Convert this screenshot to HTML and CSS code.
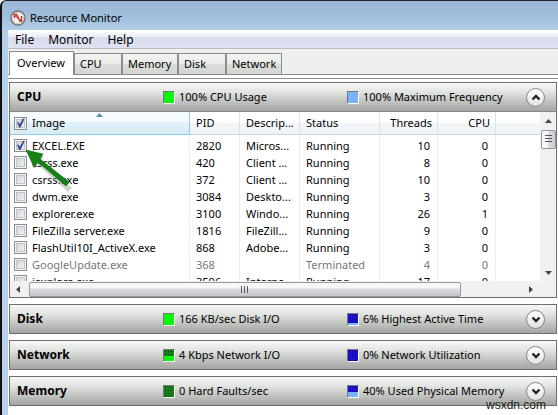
FILE: index.html
```html
<!DOCTYPE html>
<html lang="en">
<head>
<meta charset="utf-8">
<title>Resource Monitor</title>
<link rel="stylesheet" href="styles.css">
</head>
<body>
<div class="window">
  <header class="titlebar">
    <svg class="app-icon" width="16" height="16" viewBox="0 0 16 16" aria-hidden="true">
      <circle cx="8" cy="8" r="7" fill="#f4f1ef" stroke="#77736f" stroke-width="1.4"/>
      <circle cx="8" cy="8" r="5.6" fill="none" stroke="#c9c4c0" stroke-width="0.8"/>
      <path d="M4.500 8V4.500H6.500L10 11H11.500V6" fill="none" stroke="#c22a22" stroke-width="1.400"/>
      <path d="M3.500 4.500L12 11.500" stroke="#c22a22" stroke-width="1"/>
    </svg>
    <h1 class="title">Resource Monitor</h1>
  </header>
  <main class="client">
    <nav class="menubar">
      <button class="menu" type="button">File</button>
      <button class="menu" type="button">Monitor</button>
      <button class="menu" type="button">Help</button>
    </nav>
    <div class="tabs" role="tablist">
      <button class="tab active" type="button" role="tab" aria-selected="true">Overview</button>
      <button class="tab narrow" type="button" role="tab">CPU</button>
      <button class="tab mid" type="button" role="tab">Memory</button>
      <button class="tab narrow" type="button" role="tab">Disk</button>
      <button class="tab mid" type="button" role="tab">Network</button>
    </div>
    <div class="page">
      <section class="panel open">
        <div class="bar">
          <h2 class="name">CPU</h2>
          <span class="stat"><i class="swatch green"></i>100% CPU Usage</span>
          <span class="stat"><i class="swatch sky"></i>100% Maximum Frequency</span>
          <button class="toggle" type="button" aria-label="Collapse CPU"><svg width="10" height="7" viewBox="0 0 10 7"><path d="M1.500 5.500L5 2L8.500 5.500" /></svg></button>
        </div>
        <div class="list">
          <div class="view">
            <table class="grid">
              <colgroup><col class="c-image"><col class="c-pid"><col class="c-desc"><col class="c-status"><col class="c-threads"><col class="c-cpu"><col></colgroup>
              <thead>
                <tr>
                  <th class="sorted"><svg class="sort" width="7" height="4" viewBox="0 0 7 4" aria-hidden="true"><path d="M0 4L3.500 0L7 4Z" fill="#5d8ba8"/></svg><label class="pick"><input type="checkbox" checked>Image</label></th>
                  <th>PID</th><th>Descrip...</th><th>Status</th><th class="num">Threads</th><th class="num">CPU</th><th></th>
                </tr>
              </thead>
              <tbody>
                <tr><td><label class="pick"><input type="checkbox" checked>EXCEL.EXE</label></td><td>2820</td><td>Micros...</td><td>Running</td><td class="num">10</td><td class="num">0</td><td></td></tr>
                <tr><td><label class="pick"><input type="checkbox">csrss.exe</label></td><td>420</td><td>Client ...</td><td>Running</td><td class="num">8</td><td class="num">0</td><td></td></tr>
                <tr><td><label class="pick"><input type="checkbox">csrss.exe</label></td><td>372</td><td>Client ...</td><td>Running</td><td class="num">10</td><td class="num">0</td><td></td></tr>
                <tr><td><label class="pick"><input type="checkbox">dwm.exe</label></td><td>3084</td><td>Deskto...</td><td>Running</td><td class="num">3</td><td class="num">0</td><td></td></tr>
                <tr><td><label class="pick"><input type="checkbox">explorer.exe</label></td><td>3100</td><td>Windo...</td><td>Running</td><td class="num">26</td><td class="num">1</td><td></td></tr>
                <tr><td><label class="pick"><input type="checkbox">FileZilla server.exe</label></td><td>1816</td><td>FileZill...</td><td>Running</td><td class="num">9</td><td class="num">0</td><td></td></tr>
                <tr><td><label class="pick"><input type="checkbox">FlashUtil10I_ActiveX.exe</label></td><td>868</td><td>Adobe...</td><td>Running</td><td class="num">3</td><td class="num">0</td><td></td></tr>
                <tr class="ended"><td><label class="pick"><input type="checkbox">GoogleUpdate.exe</label></td><td>368</td><td></td><td>Terminated</td><td class="num">4</td><td class="num">0</td><td></td></tr>
                <tr><td><label class="pick"><input type="checkbox">iexplore.exe</label></td><td>3596</td><td>Interne...</td><td>Running</td><td class="num">17</td><td class="num">0</td><td></td></tr>
              </tbody>
            </table>
          </div>
          <div class="vscroll">
            <svg class="arrow" width="7" height="4" viewBox="0 0 7 4"><path d="M0 4L3.500 0L7 4Z"/></svg>
            <div class="vthumb"></div>
            <svg class="arrow" width="7" height="4" viewBox="0 0 7 4"><path d="M0 0L3.500 4L7 0Z"/></svg>
          </div>
          <div class="hscroll">
            <svg class="arrow" width="4" height="7" viewBox="0 0 4 7"><path d="M4 0L0 3.500L4 7Z"/></svg>
            <div class="track"><div class="hthumb"><i class="grip"></i></div></div>
            <svg class="arrow" width="4" height="7" viewBox="0 0 4 7"><path d="M0 0L4 3.500L0 7Z"/></svg>
          </div>
        </div>
      </section>
      <section class="panel">
        <div class="bar">
          <h2 class="name">Disk</h2>
          <span class="stat"><i class="swatch green"></i>166 KB/sec Disk I/O</span>
          <span class="stat"><i class="swatch blue low"></i>6% Highest Active Time</span>
          <button class="toggle" type="button" aria-label="Expand Disk"><svg width="10" height="7" viewBox="0 0 10 7"><path d="M1.500 1.500L5 5L8.500 1.500" /></svg></button>
        </div>
      </section>
      <section class="panel">
        <div class="bar">
          <h2 class="name">Network</h2>
          <span class="stat"><i class="swatch forest half"></i>4 Kbps Network I/O</span>
          <span class="stat"><i class="swatch blue"></i>0% Network Utilization</span>
          <button class="toggle" type="button" aria-label="Expand Network"><svg width="10" height="7" viewBox="0 0 10 7"><path d="M1.500 1.500L5 5L8.500 1.500" /></svg></button>
        </div>
      </section>
      <section class="panel">
        <div class="bar">
          <h2 class="name">Memory</h2>
          <span class="stat"><i class="swatch forest"></i>0 Hard Faults/sec</span>
          <span class="stat"><i class="swatch blue part"></i>40% Used Physical Memory</span>
          <button class="toggle" type="button" aria-label="Expand Memory"><svg width="10" height="7" viewBox="0 0 10 7"><path d="M1.500 1.500L5 5L8.500 1.500" /></svg></button>
        </div>
      </section>
    </div>
  </main>
  <svg class="pointer" width="54" height="48" viewBox="0 0 54 48" aria-hidden="true">
    <path d="M3 4L19 8L16 12L47 39L43 43L13 16L9 20Z" fill="#777" opacity="0.35"/>
    <path d="M1 1L18 5L15 10L44 33L41 37L13 13L9 18Z" fill="#168216" stroke="#0b6b10" stroke-width="0.6"/>
  </svg>
  <span class="watermark">wsxdn.com</span>
</div>
</body>
</html>
```
FILE: styles.css
```css
* { box-sizing: border-box; }
body {
  margin: 0;
  background: #fff;
  color: #000;
  font-family: "Noto Sans", "Open Sans", sans-serif;
  font-size: 11px;
  line-height: 16px;
}
button { font: inherit; color: inherit; margin: 0; border: 0; background: none; padding: 0; }
h1, h2 { margin: 0; font-size: inherit; font-weight: normal; }

.window {
  position: relative;
  min-height: 100vh;
  border-top: 1px solid #2b2024;
  border-left: 2px solid #101014;
  border-top-left-radius: 6px;
  background: linear-gradient(#9ab7d5, #a3c0de 18px, #b1cfe6 30px, #b9d2ec 120px);
  overflow: hidden;
}
.titlebar {
  display: flex;
  align-items: center;
  gap: 4px;
  height: 29px;
  padding: 5px 8px 0;
}
.client { margin-left: 6px; background: #fff; min-height: calc(100vh - 30px); }

.menubar {
  display: flex;
  gap: 14px;
  height: 19px;
  padding-left: 7px;
  border-bottom: 1px solid #b9bcc8;
  background: linear-gradient(#fdfdfe, #e9edf5 7px, #d7dcee 7px, #dfe2f3);
}
.menu { line-height: 19px; }
.title, .menu, .tab { font-size: 12px; }
.title { font-size: 11px; }

.tabs {
  display: flex;
  align-items: flex-end;
  height: 26px;
  padding-left: 1px;
  background: #eef0ed;
  border-bottom: 1px solid #898c8c;
}
.tab {
  height: 21px;
  padding: 0 4px 0 5px;
  border: 1px solid #8a8d8d;
  border-bottom: 0;
  font-size: 11px;
  text-align: left;
  background: linear-gradient(#f3f4f2, #ebecea 50%, #dcdedb 50%, #d2d5d1);
}
.tab.narrow { width: 48px; }
.tab.mid { width: 56px; }
.tab.active {
  width: 65px;
  height: 24px;
  margin-bottom: -1px;
  padding: 0 7px 2px;
  background: #fff;
}

.page {
  display: flex;
  flex-direction: column;
  gap: 6px;
  margin-top: 3px;
  padding: 3px 1px 8px;
  border-top: 1px solid #898c8c;
}
.panel { border: 1px solid #6d6f6d; }
.bar {
  display: grid;
  grid-template-columns: 146px 184px 1fr 20px;
  align-items: center;
  height: 28px;
  padding: 0 10px 0 7px;
  background: linear-gradient(#f6f8f5, #e4e6e3 30%, #b4b7b3 80%, #a4a6a3);
}
.open .bar { border-bottom: 1px solid #858785; height: 29px; }
.name { font-weight: bold; font-size: 12px; }
.stat { display: flex; align-items: center; gap: 4px; white-space: nowrap; }
.swatch {
  width: 12px;
  height: 13px;
  border: 1px solid #fff;
  border-top-color: #777;
  border-left-color: #777;
}
.green { background: #0df50a; }
.sky { background: #77b5fb; }
.blue { background: radial-gradient(circle, #07066a 1px, transparent 1px) 0 0 / 3px 3px #1b10d0; }
.forest { background: radial-gradient(circle, #033a05 1px, transparent 1px) 0 0 / 3px 3px #16801a; }
.low { box-shadow: inset 0 -2px #77b5fb; }
.part { box-shadow: inset 0 -5px #77b5fb; }
.half { box-shadow: inset 0 -5px #0df50a; }
.toggle {
  display: flex;
  align-items: center;
  justify-content: center;
  width: 19px;
  height: 19px;
  border: 1px solid #858785;
  border-radius: 50%;
  background: linear-gradient(#fff, #e0e2e0);
}
.toggle path { fill: none; stroke: #222; stroke-width: 2.4; }

.list {
  display: grid;
  grid-template-columns: 1fr 16px;
  grid-template-rows: 169px 16px;
  background: #fff;
}
.view { overflow: hidden; }
.grid { width: 100%; table-layout: fixed; border-collapse: separate; border-spacing: 0; }
.c-image { width: 180px; }
.c-pid { width: 50px; }
.c-desc { width: 60px; }
.c-status { width: 80px; }
.c-threads, .c-cpu { width: 58px; }
th, td {
  padding: 0 0 0 6px;
  text-align: left;
  font-weight: normal;
  white-space: nowrap;
  border-right: 1px solid #e8eff7;
}
th:last-child, td:last-child { border-right: 0; }
th {
  height: 23px;
  border-right-color: #dce5ec;
  border-bottom: 1px solid #ccd7e0;
  background: linear-gradient(#fff 50%, #f3f6f9 50%, #eff3f7);
}
.sorted {
  position: relative;
  border-color: #93c9e3;
  background: linear-gradient(#f4fafd 45%, #e0f1fa 45%, #d8ecf6);
}
.sort { position: absolute; top: 1px; left: 48%; }
td { height: 17px; line-height: 17px; }
tbody tr:first-child td { height: 19px; padding-top: 2px; }
th:first-child, td:first-child { padding-left: 4px; }
.num { text-align: right; padding-right: 7px; }
th.num { padding-right: 5px; }
.pick { display: flex; align-items: center; gap: 5px; }
.ended { color: #777; }
input[type="checkbox"] {
  appearance: none;
  width: 13px;
  height: 13px;
  margin: 0;
  border: 1px solid #8b8e90;
  box-shadow: inset 0 0 0 1px #f4f4f4, inset 0 0 0 2px #bfc4c9;
  background: linear-gradient(135deg, #cdd1d6, #f6f6f6);
}
input[type="checkbox"]:checked::before {
  content: "";
  display: block;
  height: 11px;
  background: #3c4893;
  clip-path: polygon(18% 46%, 32% 42%, 43% 62%, 72% 8%, 88% 8%, 50% 90%, 38% 90%);
}

.arrow { fill: #444; flex: none; }
.vscroll {
  display: flex;
  flex-direction: column;
  align-items: center;
  padding: 7px 0 6px;
  background: #f0f1f0;
}
.vthumb {
  width: 15px;
  height: 19px;
  margin: 7px 0 auto;
  border: 1px solid #96989c;
  border-radius: 2px;
  background: repeating-linear-gradient(#555 0 1px, transparent 1px 3px) center / 7px 9px no-repeat, linear-gradient(90deg, #f7f7f7 45%, #dcdde0 50%, #cacbd0);
}
.hscroll {
  grid-column: 1 / -1;
  display: flex;
  align-items: center;
  gap: 9px;
  padding: 0 23px 0 6px;
  background: #f0f1f0;
}
.track { flex: 1; }
.hthumb {
  display: flex;
  align-items: center;
  justify-content: center;
  width: 88%;
  height: 15px;
  border: 1px solid #96989c;
  border-radius: 2px;
  background: linear-gradient(#f7f7f7 40%, #dbdcdf 45%, #c6c7cd);
}
.grip { width: 8px; height: 7px; background: repeating-linear-gradient(90deg, #555 0 1px, transparent 1px 3px); }

.pointer { position: absolute; left: 23px; top: 148px; pointer-events: none; }
.watermark {
  position: absolute;
  right: 12px;
  bottom: 2px;
  color: #222;
  font-family: "Liberation Sans", sans-serif;
  font-size: 12px;
}
```
